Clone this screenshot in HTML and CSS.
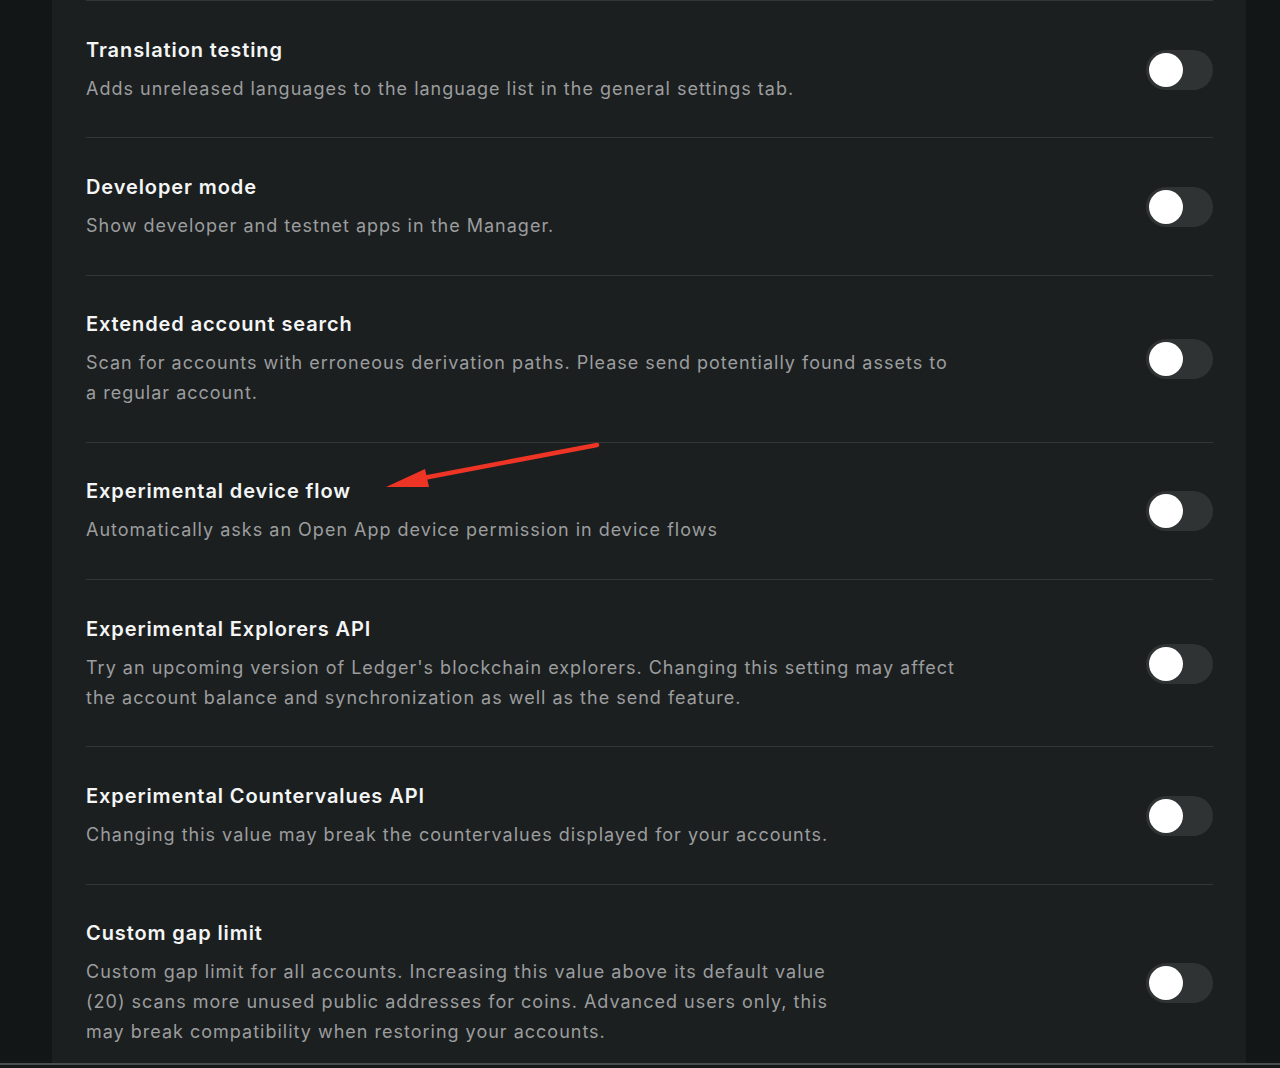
FILE: index.html
```html
<!DOCTYPE html>
<html>
<head>
  <meta charset="UTF-8">
  <title>Experimental features</title>
  <link rel="stylesheet" href="styles.css">
</head>
<body>
<div class="screen">
  <div class="viewport">
    <div class="panel">
      <div class="row">
        <div class="info">
          <div class="title">Translation testing</div>
          <div class="desc">Adds unreleased languages to the language list in the general settings tab.</div>
        </div>
        <span class="switch"></span>
      </div>
      <div class="row">
        <div class="info">
          <div class="title">Developer mode</div>
          <div class="desc">Show developer and testnet apps in the Manager.</div>
        </div>
        <span class="switch"></span>
      </div>
      <div class="row">
        <div class="info">
          <div class="title">Extended account search</div>
          <div class="desc">Scan for accounts with erroneous derivation paths. Please send potentially found assets to a regular account.</div>
        </div>
        <span class="switch"></span>
      </div>
      <div class="row">
        <div class="info">
          <div class="title">Experimental device flow</div>
          <div class="desc">Automatically asks an Open App device permission in device flows</div>
        </div>
        <span class="switch"></span>
      </div>
      <div class="row">
        <div class="info">
          <div class="title">Experimental Explorers API</div>
          <div class="desc">Try an upcoming version of Ledger's blockchain explorers. Changing this setting may affect the account balance and synchronization as well as the send feature.</div>
        </div>
        <span class="switch"></span>
      </div>
      <div class="row">
        <div class="info">
          <div class="title">Experimental Countervalues API</div>
          <div class="desc">Changing this value may break the countervalues displayed for your accounts.</div>
        </div>
        <span class="switch"></span>
      </div>
      <div class="row">
        <div class="info info_narrow">
          <div class="title">Custom gap limit</div>
          <div class="desc">Custom gap limit for all accounts. Increasing this value above its default value (20) scans more unused public addresses for coins. Advanced users only, this may break compatibility when restoring your accounts.</div>
        </div>
        <span class="switch"></span>
      </div>
    </div>
    <!-- annotation arrow drawn on top of the screenshot -->
    <svg class="arrow" width="240" height="60" viewBox="0 0 240 60">
      <line x1="227" y1="7" x2="48" y2="41" stroke="#ee3424" stroke-width="4.5" stroke-linecap="round"/>
      <polygon points="16,49 55,31 59,49" fill="#ee3424"/>
    </svg>
  </div>
  <div class="bottom"></div>
</div>
</body>
</html>
```

FILE: styles.css
```css
* {
  margin: 0;
  padding: 0;
  box-sizing: border-box;
}
body {
  background-color: #121617;
  font-family: Inter, "Noto Sans", sans-serif;
  overflow: hidden;
}
.screen {
  display: flex;
  flex-direction: column;
  height: 1068px;
}
.viewport {
  position: relative;
  flex: 1;
  overflow: hidden;
}
.panel {
  width: 1194px;
  min-height: 100%;
  margin-left: 52px;
  padding: 0 33px 0 34px;
  background-color: #1c1f20;
}
.row {
  display: flex;
  align-items: center;
  justify-content: space-between;
  border-top: 1px solid #333637;
  padding: 34.5px 0 33.75px 0;
}
.info {
  max-width: 872px;
}
.info_narrow {
  max-width: 760px;
}
.title {
  font-size: 20px;
  line-height: 28px;
  font-weight: 600;
  color: #f4f5f5;
  letter-spacing: 0.9px;
}
.desc {
  margin-top: 10px;
  font-size: 18px;
  line-height: 30px;
  color: #9b9d9e;
  letter-spacing: 1px;
}
.switch {
  position: relative;
  flex: none;
  width: 67px;
  height: 40px;
  border-radius: 20px;
  background-color: #2f3334;
}
.switch::after {
  content: "";
  position: absolute;
  left: 3px;
  top: 3px;
  width: 34px;
  height: 34px;
  border-radius: 50%;
  background-color: #ffffff;
}
.arrow {
  position: absolute;
  left: 370px;
  top: 438px;
}
.bottom {
  height: 5px;
  border-top: 2px solid #4a4e4f;
  background-color: #151819;
}
```
